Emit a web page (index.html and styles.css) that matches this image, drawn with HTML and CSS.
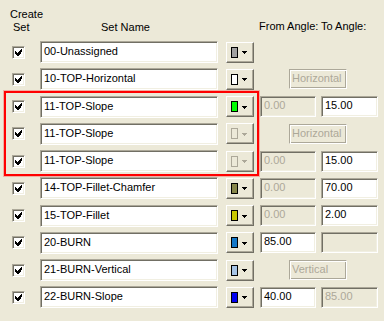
FILE: index.html
```html
<html>
  <head>
    <title>Create Sets</title>
    <link rel="stylesheet" href="styles.css">
  </head>
  <body>
    <div class="dialog">
      <div class="header">
        <div class="hCreate">Create<br><span class="hSet">Set</span></div>
        <div class="hName">Set Name</div>
        <div class="hFrom">From Angle:</div>
        <div class="hTo">To Angle:</div>
      </div>

      <div class="rows">
        <div class="row">
          <span class="check"><svg width="7" height="7"><path d="M6 0h1v3h-1zM5 1h1v4h-1zM4 2h1v4h-1zM0 2h1v3h-1zM1 3h1v3h-1zM2 4h1v3h-1zM3 3h1v4h-1z" fill="#000"/></svg></span>
          <div class="field name">00-Unassigned</div>
          <div class="colorBtn"><span class="swatch" style="background:#a0a0a0"></span><svg class="arrow" width="5" height="3"><path d="M0 0h5v1h-5zM1 1h3v1h-3zM2 2h1v1h-1z" fill="#000"/></svg></div>
        </div>

        <div class="row">
          <span class="check"><svg width="7" height="7"><path d="M6 0h1v3h-1zM5 1h1v4h-1zM4 2h1v4h-1zM0 2h1v3h-1zM1 3h1v3h-1zM2 4h1v3h-1zM3 3h1v4h-1z" fill="#000"/></svg></span>
          <div class="field name">10-TOP-Horizontal</div>
          <div class="colorBtn"><span class="swatch" style="background:#ffffff"></span><svg class="arrow" width="5" height="3"><path d="M0 0h5v1h-5zM1 1h3v1h-3zM2 2h1v1h-1z" fill="#000"/></svg></div>
          <div class="label">Horizontal</div>
        </div>

        <div class="row">
          <span class="check"><svg width="7" height="7"><path d="M6 0h1v3h-1zM5 1h1v4h-1zM4 2h1v4h-1zM0 2h1v3h-1zM1 3h1v3h-1zM2 4h1v3h-1zM3 3h1v4h-1z" fill="#000"/></svg></span>
          <div class="field name">11-TOP-Slope</div>
          <div class="colorBtn"><span class="swatch" style="background:#00ff00"></span><svg class="arrow" width="5" height="3"><path d="M0 0h5v1h-5zM1 1h3v1h-3zM2 2h1v1h-1z" fill="#000"/></svg></div>
          <div class="field angle from off">0.00</div>
          <div class="field angle to">15.00</div>
        </div>

        <div class="row">
          <span class="check"><svg width="7" height="7"><path d="M6 0h1v3h-1zM5 1h1v4h-1zM4 2h1v4h-1zM0 2h1v3h-1zM1 3h1v3h-1zM2 4h1v3h-1zM3 3h1v4h-1z" fill="#000"/></svg></span>
          <div class="field name">11-TOP-Slope</div>
          <div class="colorBtn disabled"><span class="swatch"></span><svg class="arrow" width="5" height="3"><path d="M0 0h5v1h-5zM1 1h3v1h-3zM2 2h1v1h-1z" fill="#aca899"/></svg></div>
          <div class="label">Horizontal</div>
        </div>

        <div class="row">
          <span class="check"><svg width="7" height="7"><path d="M6 0h1v3h-1zM5 1h1v4h-1zM4 2h1v4h-1zM0 2h1v3h-1zM1 3h1v3h-1zM2 4h1v3h-1zM3 3h1v4h-1z" fill="#000"/></svg></span>
          <div class="field name">11-TOP-Slope</div>
          <div class="colorBtn disabled"><span class="swatch"></span><svg class="arrow" width="5" height="3"><path d="M0 0h5v1h-5zM1 1h3v1h-3zM2 2h1v1h-1z" fill="#aca899"/></svg></div>
          <div class="field angle from off">0.00</div>
          <div class="field angle to">15.00</div>
        </div>

        <div class="row">
          <span class="check"><svg width="7" height="7"><path d="M6 0h1v3h-1zM5 1h1v4h-1zM4 2h1v4h-1zM0 2h1v3h-1zM1 3h1v3h-1zM2 4h1v3h-1zM3 3h1v4h-1z" fill="#000"/></svg></span>
          <div class="field name">14-TOP-Fillet-Chamfer</div>
          <div class="colorBtn"><span class="swatch" style="background:#86864a"></span><svg class="arrow" width="5" height="3"><path d="M0 0h5v1h-5zM1 1h3v1h-3zM2 2h1v1h-1z" fill="#000"/></svg></div>
          <div class="field angle from off">0.00</div>
          <div class="field angle to">70.00</div>
        </div>

        <div class="row">
          <span class="check"><svg width="7" height="7"><path d="M6 0h1v3h-1zM5 1h1v4h-1zM4 2h1v4h-1zM0 2h1v3h-1zM1 3h1v3h-1zM2 4h1v3h-1zM3 3h1v4h-1z" fill="#000"/></svg></span>
          <div class="field name">15-TOP-Fillet</div>
          <div class="colorBtn"><span class="swatch" style="background:#c8c800"></span><svg class="arrow" width="5" height="3"><path d="M0 0h5v1h-5zM1 1h3v1h-3zM2 2h1v1h-1z" fill="#000"/></svg></div>
          <div class="field angle from off">0.00</div>
          <div class="field angle to">2.00</div>
        </div>

        <div class="row">
          <span class="check"><svg width="7" height="7"><path d="M6 0h1v3h-1zM5 1h1v4h-1zM4 2h1v4h-1zM0 2h1v3h-1zM1 3h1v3h-1zM2 4h1v3h-1zM3 3h1v4h-1z" fill="#000"/></svg></span>
          <div class="field name">20-BURN</div>
          <div class="colorBtn"><span class="swatch" style="background:#1478c8"></span><svg class="arrow" width="5" height="3"><path d="M0 0h5v1h-5zM1 1h3v1h-3zM2 2h1v1h-1z" fill="#000"/></svg></div>
          <div class="field angle from">85.00</div>
          <div class="field angle to off"></div>
        </div>

        <div class="row">
          <span class="check"><svg width="7" height="7"><path d="M6 0h1v3h-1zM5 1h1v4h-1zM4 2h1v4h-1zM0 2h1v3h-1zM1 3h1v3h-1zM2 4h1v3h-1zM3 3h1v4h-1z" fill="#000"/></svg></span>
          <div class="field name">21-BURN-Vertical</div>
          <div class="colorBtn"><span class="swatch" style="background:#a6c4e6"></span><svg class="arrow" width="5" height="3"><path d="M0 0h5v1h-5zM1 1h3v1h-3zM2 2h1v1h-1z" fill="#000"/></svg></div>
          <div class="label">Vertical</div>
        </div>

        <div class="row">
          <span class="check"><svg width="7" height="7"><path d="M6 0h1v3h-1zM5 1h1v4h-1zM4 2h1v4h-1zM0 2h1v3h-1zM1 3h1v3h-1zM2 4h1v3h-1zM3 3h1v4h-1z" fill="#000"/></svg></span>
          <div class="field name">22-BURN-Slope</div>
          <div class="colorBtn"><span class="swatch" style="background:#0000f0"></span><svg class="arrow" width="5" height="3"><path d="M0 0h5v1h-5zM1 1h3v1h-3zM2 2h1v1h-1z" fill="#000"/></svg></div>
          <div class="field angle from">40.00</div>
          <div class="field angle to off">85.00</div>
        </div>
      </div>

      <div class="highlight"></div>
    </div>
  </body>
</html>
```

FILE: styles.css
```css
body {
  margin: 0;
  background-color: #ece9d8;
  font-family: "Liberation Sans", Arial, sans-serif;
  font-size: 11px;
  color: #000;
}

.dialog {
  position: relative;
  width: 384px;
  height: 321px;
}

/* column headings */
.header {
  position: relative;
  height: 41px;
}
.header div {
  position: absolute;
  line-height: 13px;
}
.hCreate { left: 10px; top: 8px; }
.hSet { padding-left: 3px; }
.hName { left: 101px; top: 21px; }
.hFrom { left: 259px; top: 20px; }
.hTo { left: 321px; top: 20px; }

.rows {
  display: flex;
  flex-direction: column;
  gap: 5.25px;
}

.row {
  display: flex;
  align-items: center;
  height: 22px;
}

/* classic checkbox */
.check {
  box-sizing: border-box;
  width: 13px;
  height: 13px;
  margin: 0 15px 0 12px;
  background: #fff;
  border: 1px solid;
  border-color: #aca899 #fff #fff #aca899;
  box-shadow: inset 1px 1px #716f64, inset -1px -1px #f1efe2;
  display: flex;
  align-items: center;
  justify-content: center;
}
.check svg { display: block; }

/* sunken text boxes */
.field {
  box-sizing: border-box;
  height: 22px;
  line-height: 18px;
  padding-left: 2px;
  background: #fff;
  border: 1px solid;
  border-color: #aca899 #fff #fff #aca899;
  box-shadow: inset 1px 1px #716f64, inset -1px -1px #f1efe2;
  white-space: nowrap;
  overflow: hidden;
}
.field.off {
  background: #ece9d8;
  color: #aca899;
}
.name {
  width: 178px;
  padding-left: 3px;
}
.angle {
  height: 21px;
  line-height: 17px;
  padding-left: 3px;
}
.from { width: 56px; margin-left: 6px; }
.to { width: 57px; margin-left: 5px; }

/* colour picker buttons */
.colorBtn {
  box-sizing: border-box;
  width: 28px;
  height: 21px;
  margin-left: 8px;
  border: 1px solid;
  border-color: #fff #716f64 #716f64 #fff;
  box-shadow: inset -1px -1px #aca899;
  display: flex;
  align-items: center;
  padding-left: 4px;
}
.swatch {
  box-sizing: border-box;
  width: 7px;
  height: 11px;
  border: 1px solid #000;
}
.arrow {
  display: block;
  margin-left: 4px;
  margin-top: 1px;
}
.colorBtn.disabled .swatch {
  border-color: #aca899;
}

/* greyed read-only label boxes */
.label {
  box-sizing: border-box;
  width: 58px;
  height: 20px;
  line-height: 17px;
  margin-left: 35px;
  padding-left: 2px;
  color: #aca899;
  border: 1px solid;
  border-color: #aca899 #fff #fff #aca899;
  box-shadow: inset 1px 1px #fff, inset -1px -1px #aca899;
}

/* red marker round the three slope rows */
.highlight {
  position: absolute;
  left: 4px;
  top: 91px;
  width: 251px;
  height: 81px;
  border: 2px solid #ff0000;
  box-shadow: 0 0 0 1px rgba(255, 0, 0, 0.25);
}
```
